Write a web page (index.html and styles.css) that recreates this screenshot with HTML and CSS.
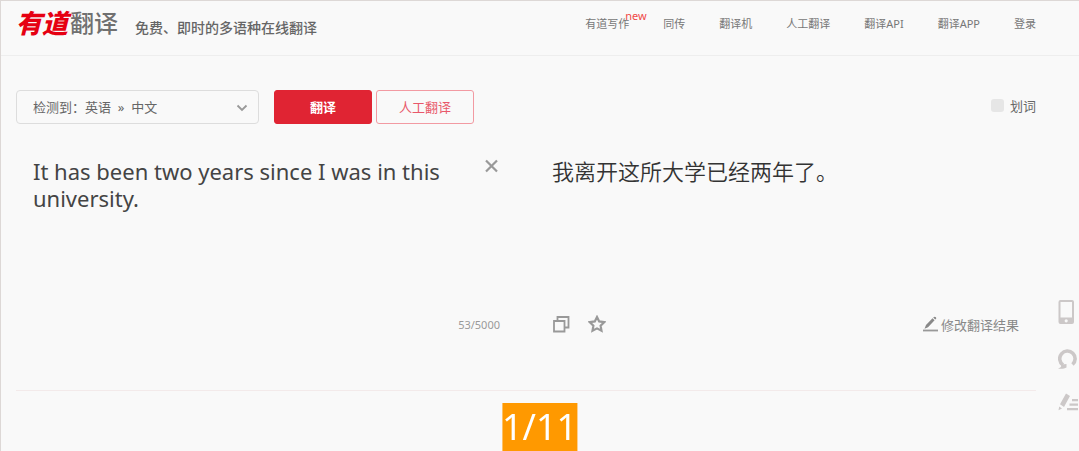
FILE: index.html
```html
<!DOCTYPE html>
<html lang="zh-CN">
<head>
  <meta charset="UTF-8">
  <title>有道翻译</title>
  <link rel="stylesheet" href="styles.css">
</head>
<body>
  <header class="header">
    <a class="logo" href="#"><span class="logo-brand">有道</span><span class="logo-name">翻译</span></a>
    <p class="slogan">免费、即时的多语种在线翻译</p>
    <nav class="nav">
      <a href="#">有道写作<span class="nav-new">new</span></a>
      <a href="#">同传</a>
      <a href="#">翻译机</a>
      <a href="#">人工翻译</a>
      <a href="#">翻译API</a>
      <a href="#">翻译APP</a>
      <a href="#">登录</a>
    </nav>
  </header>

  <main class="main">
    <div class="toolbar">
      <div class="lang">
        <select class="lang-select" aria-label="语言">
          <option>检测到：英语 &nbsp;»&nbsp; 中文</option>
        </select>
        <svg class="lang-arrow" width="12" height="8" viewBox="0 0 12 8"><path d="M1.5 1.5L6 6L10.5 1.5" fill="none" stroke="#999" stroke-width="1.8"/></svg>
      </div>
      <button class="btn btn-primary" type="button">翻译</button>
      <button class="btn btn-outline" type="button">人工翻译</button>
      <label class="pick"><input class="pick-box" type="checkbox">划词</label>
    </div>

    <div class="panels">
      <section class="panel">
        <div class="panel-body">
          <textarea class="source" aria-label="原文">It has been two years since I was in this university.</textarea>
          <button class="icon-btn" type="button" aria-label="清空">
            <svg width="16" height="16" viewBox="0 0 16 16"><path d="M2 2.5L13 13.5M13 2.5L2 13.5" stroke="#999" stroke-width="2.2"/></svg>
          </button>
        </div>
        <div class="panel-foot panel-foot-end">
          <span class="count">53/5000</span>
        </div>
      </section>

      <section class="panel">
        <div class="panel-body">
          <p class="target">我离开这所大学已经两年了。</p>
        </div>
        <div class="panel-foot">
          <button class="icon-btn" type="button" aria-label="复制">
            <svg width="18" height="18" viewBox="0 0 18 18" fill="none" stroke="#999" stroke-width="1.8"><path d="M2 6h10.5v10.5H2z"/><path d="M5.5 5.5V2H16.5V12.5H13"/></svg>
          </button>
          <button class="icon-btn" type="button" aria-label="收藏">
            <svg width="18" height="18" viewBox="0 0 18 18"><path d="M9 2L11.2 6.4L16.2 7.2L12.6 10.7L13.5 15.8L9 13.4L4.5 15.8L5.4 10.7L1.8 7.2L6.8 6.4Z" fill="none" stroke="#999" stroke-width="2.2"/></svg>
          </button>
          <a class="edit" href="#">
            <svg width="15" height="16" viewBox="0 0 15 16"><path d="M0 14.5h15" stroke="#999" stroke-width="1.8"/><path d="M1.5 12.8L3 9L9.5 2.2L11.6 4.2L5 11.2ZM10.2 1.6L11 1Q12 .4 12.9 1.3T12.8 3L12.2 3.6Z" fill="#888"/></svg>
            修改翻译结果
          </a>
        </div>
      </section>
    </div>
  </main>

  <aside class="side">
    <a href="#" aria-label="手机版">
      <svg width="20" height="24" viewBox="0 0 20 24"><path fill="#ccc8c8" fill-rule="evenodd" d="M2.5 0h11.5q2 0 2 2v20q0 2-2 2H2.5q-2 0-2-2V2q0-2 2-2zM2.5 2v15.5h11.5V2zM8.2 19.2a1.6 1.6 0 1 0 0 3.2a1.6 1.6 0 1 0 0-3.2z"/></svg>
    </a>
    <a href="#" aria-label="反馈">
      <svg width="20" height="21" viewBox="0 0 20 21"><path d="M5 17A7.7 7.7 0 1 1 14.5 16.5" fill="none" stroke="#ccc8c8" stroke-width="3.6"/><path d="M0 20.5C3 19.5 3.5 18.5 3.5 16.5L8.5 16V19.5C6.5 20.8 3 21 0 20.5Z" fill="#ccc8c8"/></svg>
    </a>
    <a href="#" aria-label="写作">
      <svg width="20" height="18" viewBox="0 0 20 18" fill="#ccc8c8"><path d="M8 0.5L12 3L6 14L2 11.2ZM1.2 13.5L4 15.5L.5 17.2Z"/><path d="M14 6h6v2.2h-6zM11.5 10.5h8.5v2.2h-8.5zM9 15h11v2.200H9z"/></svg>
    </a>
  </aside>

  <div class="pager">1/11</div>
</body>
</html>
```
FILE: styles.css
```css
* {
  box-sizing: border-box;
}
body {
  margin: 0;
  min-height: 100vh;
  background: #f9f9f9;
  border-top: 1px solid #ddd8d6;
  border-left: 1px solid #ddd8d6;
  color: #333;
  font-family: "Noto Sans", "Noto Sans CJK SC", sans-serif;
  font-size: 13px;
}
a {
  color: inherit;
  text-decoration: none;
}
p {
  margin: 0;
}
button {
  font-family: inherit;
  cursor: pointer;
}
svg {
  display: block;
}

/* header */
.header {
  display: flex;
  align-items: center;
  height: 55px;
  padding: 0 43px 10px 15px;
  border-bottom: 1px solid #eee;
}
.logo {
  display: flex;
  align-items: center;
  gap: 2px;
  line-height: 32px;
}
.logo-brand {
  color: #e60012;
  font-size: 26px;
  font-weight: 900;
  font-style: italic;
}
.logo-name {
  color: #707070;
  font-size: 24px;
  font-weight: 500;
}
.slogan {
  margin-left: 17px;
  padding-top: 8px;
  color: #666;
  font-size: 14px;
  font-weight: 500;
}
.nav {
  display: flex;
  gap: 34px;
  margin-left: auto;
  color: #777;
  font-size: 11px;
  white-space: nowrap;
}
.nav a {
  position: relative;
}
.nav-new {
  position: absolute;
  left: 100%;
  bottom: 8px;
  margin-left: -4px;
  color: #f04848;
  line-height: 14px;
}

/* toolbar */
.main {
  padding: 34px 43px 0 15px;
}
.toolbar {
  display: flex;
  align-items: center;
}
.lang {
  position: relative;
  width: 243px;
  margin-right: 15px;
}
.lang-select {
  width: 100%;
  height: 34px;
  padding: 0 32px 0 16px;
  appearance: none;
  border: 1px solid #ddd;
  border-radius: 4px;
  background: transparent;
  color: #666;
  font-family: inherit;
  font-size: 13px;
}
.lang-arrow {
  position: absolute;
  right: 11px;
  top: 14px;
  pointer-events: none;
}
.btn {
  width: 98px;
  height: 34px;
  margin-right: 4px;
  padding: 0 0 2px;
  border-radius: 3px;
  font-size: 13px;
}
.btn-primary {
  border: 1px solid #e02433;
  background: #e02433;
  color: #fff;
  font-weight: 700;
}
.btn-outline {
  border: 1px solid #f29aa2;
  background: transparent;
  color: #e8586a;
}
.pick {
  display: flex;
  align-items: center;
  gap: 6px;
  margin-left: auto;
  padding-bottom: 3px;
  color: #666;
}
.pick-box {
  width: 13px;
  height: 13px;
  margin: 0;
  appearance: none;
  border-radius: 3px;
  background: #e6e6e6;
}

/* panels */
.panels {
  display: grid;
  grid-template-columns: 1fr 1fr;
  border-bottom: 1px solid #f3eaea;
}
.panel {
  padding: 34px 26px 55px 17px;
}
.panel + .panel {
  padding-left: 26px;
  padding-right: 17px;
}
.panel-body {
  display: flex;
  align-items: flex-start;
  height: 155px;
}
.source {
  flex: 1;
  height: 100%;
  padding: 0;
  border: 0;
  outline: 0;
  resize: none;
  background: transparent;
  color: #444;
  font-family: inherit;
  font-size: 22px;
  line-height: 27px;
}
.target {
  font-size: 22px;
  font-weight: 350;
  line-height: 27px;
}
.icon-btn {
  padding: 0;
  border: 0;
  background: transparent;
}
.panel-foot {
  display: flex;
  align-items: center;
  gap: 18px;
  height: 22px;
}
.panel-foot-end {
  justify-content: flex-end;
}
.count {
  color: #999;
  font-size: 11px;
}
.edit {
  display: flex;
  align-items: center;
  gap: 3px;
  margin-left: auto;
  color: #888;
}

/* floating tools on the right */
.side {
  position: fixed;
  right: 1px;
  top: 300px;
  display: flex;
  flex-direction: column;
  gap: 24px;
}

.pager {
  position: fixed;
  left: 50%;
  bottom: 0;
  transform: translateX(-50%);
  background: #ff9900;
  color: #fff;
  font-size: 36px;
  line-height: 48px;
}
```
